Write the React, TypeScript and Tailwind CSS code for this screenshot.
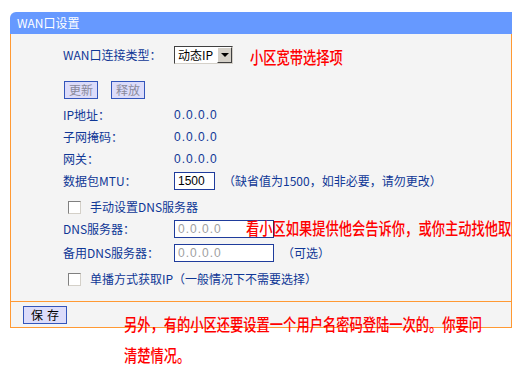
const blue = "text-[#0f3796]";

function Row({ label, children, className = "" }: { label: string; children?: React.ReactNode; className?: string }) {
  return (
    <div className={`flex items-center ${className}`}>
      <div className={`w-[111px] ${blue}`}>{label}</div>
      {children}
    </div>
  );
}

function Check({ label }: { label: string }) {
  return (
    <div className="flex items-center h-[22px] pl-[5px]">
      <span className="w-[13px] h-[13px] bg-white border border-t-[#808080] border-l-[#808080] border-b-[#d4d0c8] border-r-[#d4d0c8]" />
      <span className={`ml-[9px] ${blue}`}>{label}</span>
    </div>
  );
}

function Note({ children }: { children: React.ReactNode }) {
  return (
    <span className="inline-block origin-left scale-x-[0.78] whitespace-nowrap text-[17px] font-medium text-[#ff0000]">
      {children}
    </span>
  );
}

export default function App() {
  return (
    <div
      className="relative w-[520px] h-[371px] overflow-hidden bg-white text-[12px] leading-none"
      style={{ fontFamily: '"Noto Sans CJK SC", "Liberation Sans", sans-serif' }}
    >
      <div className="ml-[10px] mt-[12px] w-[502px]">
        {/* header */}
        <div className="h-[22px] bg-[#6699ff] rounded-tl-[6px] flex items-center pl-[7px] text-white">
          WAN口设置
        </div>

        {/* body */}
        <div className="bg-[#f4f4f4] border-x border-[#ff9933] pl-[52px] pt-[10px] h-[267px]">
          <Row label="WAN口连接类型：" className="h-[22px]">
            <div className="flex items-center h-[18px] w-[59px] bg-white border border-t-[#404040] border-l-[#404040] border-b-[#d4d0c8] border-r-[#d4d0c8]">
              <span className="flex-1 pl-[3px] text-black">动态IP</span>
              <span className="w-[15px] h-[16px] bg-[#d4d0c8] border border-t-white border-l-white border-b-[#404040] border-r-[#404040] flex items-center justify-center">
                <span className="w-0 h-0 border-x-[4px] border-x-transparent border-t-[4px] border-t-black" />
              </span>
            </div>
            <span className="ml-[17px] mt-[2px]">
              <Note>小区宽带选择项</Note>
            </span>
          </Row>

          <div className="flex gap-[13px] mt-[15px] pl-[1px]">
            <span className="w-[34px] h-[18px] bg-[#dcdcfa] border border-[#3355bb] text-[#8a8a9a] flex items-center justify-center">更新</span>
            <span className="w-[34px] h-[18px] bg-[#dcdcfa] border border-[#3355bb] text-[#8a8a9a] flex items-center justify-center">释放</span>
          </div>

          <div className="mt-[5px]">
            {["IP地址：", "子网掩码：", "网关："].map((l) => (
              <Row key={l} label={l} className="h-[22px]">
                <span className={`${blue} tracking-[1px]`} style={{ fontFamily: '"Liberation Sans", sans-serif' }}>0.0.0.0</span>
              </Row>
            ))}
          </div>

          <Row label="数据包MTU：" className="h-[22px]">
            <span className="w-[41px] h-[18px] bg-white border border-[#1f3c9c] pl-[3px] flex items-center text-black" style={{ fontFamily: '"Liberation Sans", sans-serif' }}>1500</span>
            <span className={`ml-[8px] ${blue}`}>（缺省值为1500，如非必要，请勿更改）</span>
          </Row>

          <div className="mt-[4px]">
            <Check label="手动设置DNS服务器" />
          </div>

          <Row label="DNS服务器：" className="h-[22px]">
            <span className="w-[100px] h-[18px] bg-white border border-[#1f3c9c] pl-[3px] flex items-center text-[#a0a0a0] tracking-[1px]" style={{ fontFamily: '"Liberation Sans", sans-serif' }}>0.0.0.0</span>
          </Row>

          <Row label="备用DNS服务器：" className="h-[22px] mt-[2px]">
            <span className="w-[100px] h-[18px] bg-white border border-[#1f3c9c] pl-[3px] flex items-center text-[#a0a0a0] tracking-[1px]" style={{ fontFamily: '"Liberation Sans", sans-serif' }}>0.0.0.0</span>
            <span className={`ml-[8px] ${blue}`}>（可选）</span>
          </Row>

          <div className="mt-[4px]">
            <Check label="单播方式获取IP（一般情况下不需要选择）" />
          </div>
        </div>

        {/* footer */}
        <div className="h-[27px] bg-[#f4f4f4] border border-[#ff9933] flex items-center pl-[12px]">
          <span className="w-[44px] h-[18px] bg-[#dcdcfa] border border-[#3355bb] text-black flex items-center justify-center tracking-[4px] pl-[4px]">保存</span>
        </div>
      </div>

      {/* annotations */}
      <div className="absolute left-[246px] top-[219px]">
        <Note>看小区如果提供他会告诉你，或你主动找他取</Note>
      </div>
      <div className="absolute left-[124px] top-[309px] leading-[29px]">
        <div><Note>另外，有的小区还要设置一个用户名密码登陆一次的。你要问</Note></div>
        <div><Note>清楚情况。</Note></div>
      </div>
    </div>
  );
}
